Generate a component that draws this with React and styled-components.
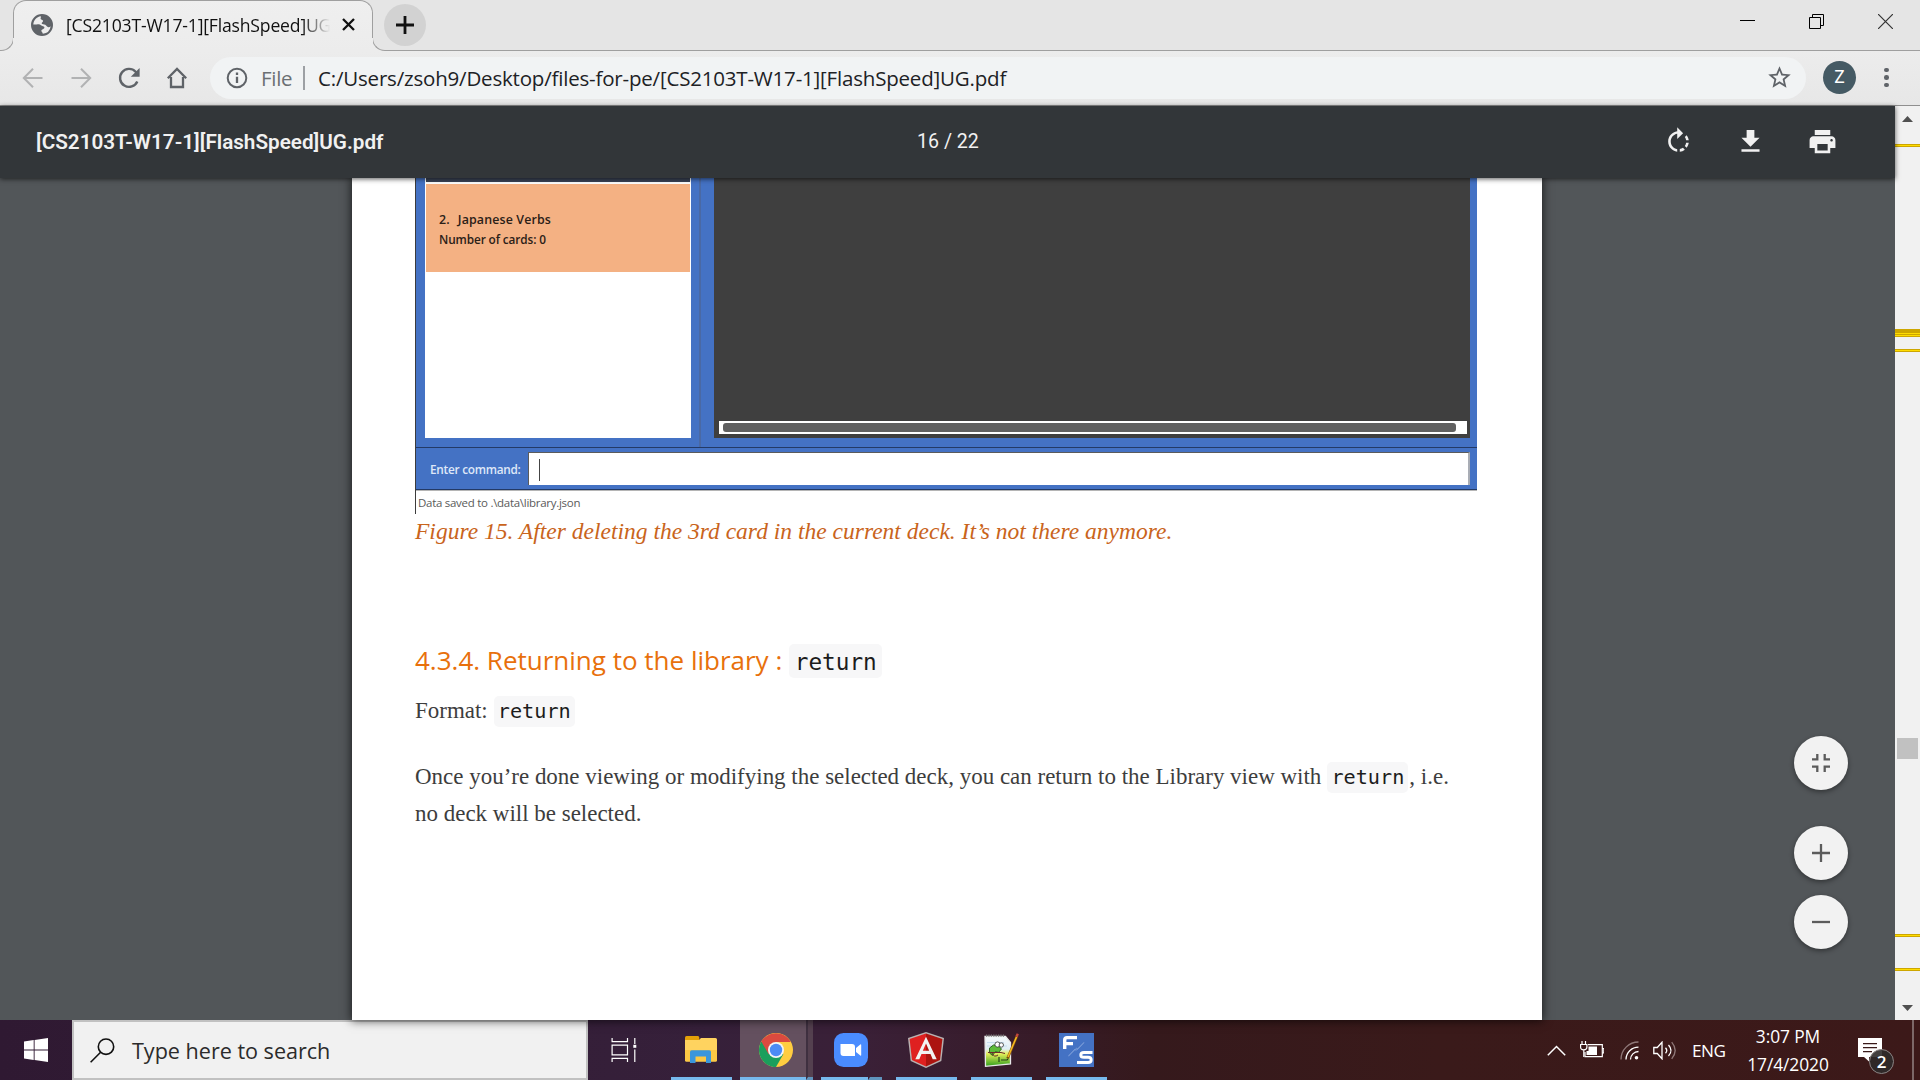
import React from "react";
import styled, { createGlobalStyle } from "styled-components";
import { MdPrint, MdFileDownload, MdStarBorder } from "react-icons/md";

const UI = '"Open Sans", "Noto Sans", sans-serif';
const SERIF = '"Liberation Serif", serif';
const MONO = '"DejaVu Sans Mono", monospace';

const GlobalStyle = createGlobalStyle`
  *, *::before, *::after { box-sizing: border-box; }
  body { margin: 0; overflow: hidden; background: #525659; }
  svg { display: block; flex: none; }
`;

const Desktop = styled.div`
  width: 1920px;
  height: 1080px;
  display: flex;
  flex-direction: column;
  overflow: hidden;
  font-family: ${UI};
  white-space: pre;
`;

/* ---------- tab strip ---------- */
const TabStrip = styled.header`
  flex: none;
  height: 51px;
  display: flex;
  background: #ececec;
`;
const LeftFoot = styled.div`
  position: relative;
  width: 14px;
  margin-right: -1px;
  background: #e5e5e5;
  border-radius: 0 0 13px 0;
  &::after {
    content: "";
    position: absolute;
    inset: auto 0 0 0;
    height: 38px;
    border: solid #9f9f9f;
    border-width: 0 1.5px 1.5px 0;
    border-radius: 0 0 13px 0;
  }
`;
const TabWrap = styled.div`
  width: 360px;
  background: #e5e5e5;
  z-index: 1;
  height: 38px;
`;
const Tab = styled.div`
  height: 51px;
  padding: 0 18px 2px 18px;
  display: flex;
  align-items: center;
  background: linear-gradient(#efefef, #ececec);
  border-radius: 13px 13px 0 0;
  position: relative;
  &::after {
    content: "";
    position: absolute;
    inset: 0 0 auto 0;
    height: 38px;
    border: solid #9f9f9f;
    border-width: 1.5px 1.5px 0 1.5px;
    border-radius: 13px 13px 0 0;
  }
`;
const TabTitle = styled.span`
  flex: 1;
  margin: 0 11px 0 13px;
  overflow: hidden;
  font-size: 17.6px;
  letter-spacing: -0.18px;
  line-height: 26px;
  color: #111;
  mask-image: linear-gradient(90deg, #000 236px, transparent 264px);
`;
const RightFoot = styled.div`
  flex: 1;
  display: flex;
  justify-content: space-between;
  align-items: flex-start;
  position: relative;
  margin-left: -1px;
  padding: 4px 27px 0 12px;
  background: #e5e5e5;
  border-radius: 0 0 0 13px;
  &::after {
    content: "";
    position: absolute;
    inset: auto 0 0 0;
    height: 38px;
    border: solid #9f9f9f;
    border-width: 0 0 1.5px 1.5px;
    border-radius: 0 0 0 13px;
  }
`;
const NewTab = styled.div`
  width: 42px;
  height: 42px;
  border-radius: 50%;
  background: #d2d2d2;
  display: flex;
  align-items: center;
  justify-content: center;
`;
const WindowControls = styled.div`
  display: flex;
  gap: 54px;
  padding-top: 10px;
`;

/* ---------- address bar ---------- */
const Toolbar = styled.div`
  flex: none;
  height: 55px;
  padding: 0 27px 1px 21px;
  display: flex;
  align-items: center;
  background: linear-gradient(#ececec, #e7e7e7);
  border-bottom: 1px solid #8f8f8f;
`;
const NavButtons = styled.div`
  display: flex;
  align-items: center;
  gap: 24px;
  width: 189px;
`;
const Omnibox = styled.div`
  flex: none;
  width: 1596px;
  height: 42px;
  padding: 0 13px 0 16px;
  border-radius: 21px;
  display: flex;
  align-items: center;
  background: #f1f3f4;
  font-size: 20.5px;
  line-height: 30px;
`;
const Scheme = styled.span`
  margin-left: 13px;
  width: 42px;
  letter-spacing: -0.3px;
  color: #6b6f73;
`;
const SchemeDivider = styled.i`
  width: 2px;
  height: 24px;
  background: #9da0a4;
`;
const Url = styled.span`
  flex: 1;
  margin-left: 13px;
  letter-spacing: -0.19px;
  color: #202124;
`;
const Avatar = styled.div`
  width: 33px;
  height: 33px;
  margin: 0 28px 0 17px;
  border-radius: 50%;
  background: #455a64;
  color: #fff;
  font: 400 17.5px/33px Roboto, sans-serif;
  text-align: center;
`;
const MenuDots = styled.div`
  display: flex;
  flex-direction: column;
  gap: 3px;
`;
const Dot = styled.i`
  width: 4.6px;
  height: 4.6px;
  border-radius: 50%;
  background: #5f6368;
`;

/* ---------- pdf viewer ---------- */
const Viewer = styled.main`
  flex: none;
  height: 914px;
  display: flex;
`;
const Pane = styled.section`
  position: relative;
  width: 1895px;
  display: flex;
  flex-direction: column;
  background: #525659;
`;
const PdfBar = styled.div`
  flex: none;
  height: 72px;
  padding: 0 57px 1px 36px;
  display: grid;
  grid-template-columns: 881px 1fr auto;
  align-items: center;
  background: #323639;
  color: #f1f1f1;
  font-family: Roboto, sans-serif;
  box-shadow: 0 1px 5px rgba(0, 0, 0, 0.65);
  z-index: 1;
`;
const PdfTitle = styled.span`
  font-size: 20.7px;
  font-weight: 600;
`;
const PageCount = styled.span`
  font-size: 19.6px;
  font-weight: 450;
`;
const PdfActions = styled.div`
  display: flex;
  gap: 41px;
`;
const Sheet = styled.article`
  flex: 1;
  min-height: 0;
  width: 1190px;
  margin-left: 352px;
  padding-left: 63px;
  background: #fff;
  box-shadow: 0 0 9px 1px rgba(0, 0, 0, 0.65);
`;
const Figure = styled.div`
  width: 1062px;
  height: 336px;
  border-left: 1px solid #3c3c3c;
  display: flex;
  flex-direction: column;
`;
const AppBody = styled.div`
  height: 269px;
  display: flex;
  background: #4472c4;
`;
const DeckColumn = styled.div`
  width: 285px;
  padding: 0 8px 9px 9px;
  border-right: 2px solid #4a69a4;
`;
const DeckList = styled.div`
  height: 260px;
  padding: 0 1px;
  background: #fff;
`;
const SelectedDeck = styled.div`
  height: 4px;
  background: #3b4457;
`;
const DeckCard = styled.div`
  height: 88px;
  margin-top: 2px;
  padding: 26px 0 0 13px;
  background: #f4b183;
  color: #2b2017;
  font-weight: 600;
  line-height: 19.5px;
`;
const DeckName = styled.div`
  display: flex;
  gap: 8px;
  font-size: 12.4px;
  letter-spacing: 0.15px;
`;
const DeckCount = styled.div`
  font-size: 11.8px;
  letter-spacing: -0.1px;
`;
const CardPanel = styled.div`
  width: 756px;
  height: 260px;
  margin-left: 13px;
  padding: 0 3px 4px 5px;
  display: flex;
  align-items: flex-end;
  background: #3f3f3f;
`;
const ScrollStrip = styled.div`
  flex: 1;
  height: 13px;
  padding: 2px 11px 2px 4px;
  background: #fff;
`;
const StripThumb = styled.div`
  height: 9px;
  border-radius: 3px;
  background: #606060;
`;
const CommandBar = styled.div`
  height: 43px;
  padding: 4px 7px 4px 14px;
  display: flex;
  border: solid #233a66;
  border-width: 1px 0;
  background: #4472c4;
  box-shadow: 0 1px 0 #b5b5b5;
`;
const CommandLabel = styled.span`
  width: 98px;
  font-size: 11.8px;
  font-weight: 600;
  letter-spacing: -0.26px;
  line-height: 35px;
  color: #dfe8f8;
`;
const CommandInput = styled.div`
  flex: 1;
  padding: 6px 0 0 10px;
  border: solid #5b5b5b;
  border-width: 1px 1px 0 1px;
  border-right: 2px solid #a9adb5;
  background: #fff;
`;
const Caret = styled.div`
  width: 1.4px;
  height: 22px;
  background: #444;
`;
const Status = styled.div`
  padding: 0 2px;
  font-size: 11.5px;
  letter-spacing: -0.28px;
  line-height: 25px;
  color: #5a5a5a;
`;
const Caption = styled.div`
  font: italic 23.52px/34px ${SERIF};
  color: #c9641c;
`;
const Heading = styled.h4`
  margin: 94px 0 0;
  display: flex;
  align-items: center;
  height: 36px;
  font-size: 26px;
  font-weight: 400;
  line-height: 36px;
  color: #e8700c;
`;
const Line = styled.div`
  height: 37px;
  display: flex;
  align-items: center;
  margin-top: ${(p) => p.$gap || 0}px;
  font: 22.97px/37px ${SERIF};
  color: #3d3d3d;
`;
const Code = styled.code`
  width: ${(p) => (p.$large ? 93 : 81)}px;
  height: ${(p) => (p.$large ? 34 : 31)}px;
  margin: 2px 1px 0 ${(p) => (p.$large ? 7 : 6)}px;
  border-radius: 5px;
  background: #f7f7f8;
  color: #1c1c1c;
  font: ${(p) => (p.$large ? 22.7 : 20.2)}px/${(p) => (p.$large ? 36 : 31)}px ${MONO};
  text-align: center;
`;
const ZoomControls = styled.div`
  position: absolute;
  right: 47px;
  top: 630px;
  display: flex;
  flex-direction: column;
  gap: 15px;
`;
const RoundButton = styled.div`
  width: 54px;
  height: 54px;
  margin-bottom: ${(p) => (p.$apart ? 21 : 0)}px;
  border-radius: 50%;
  display: flex;
  align-items: center;
  justify-content: center;
  background: #f2f2f2;
  box-shadow: 0 2px 5px rgba(0, 0, 0, 0.4);
`;
const Scrollbar = styled.aside`
  position: relative;
  width: 25px;
  padding: 10px 7px 9px;
  display: flex;
  flex-direction: column;
  justify-content: space-between;
  background: #f1f1f1;
`;
const Thumb = styled.div`
  position: absolute;
  left: 2px;
  top: 632px;
  width: 21px;
  height: 21px;
  background: #c1c1c1;
`;
const Marker = styled.div`
  position: absolute;
  left: 0;
  top: ${(p) => p.$y}px;
  width: 25px;
  height: 3px;
  background: #ffdc00;
  border: solid #cda600;
  border-width: 1px 0;
`;
const MarkerBlock = styled.div`
  position: absolute;
  left: 0;
  top: 223px;
  width: 25px;
  height: 8px;
  background: linear-gradient(#cda600 4px, #ffdc00 4px, #ffdc00 5px, #cda600 5px, #cda600 6px, #ffdc00 6px, #ffdc00 7px, #cda600 7px);
`;

/* ---------- taskbar ---------- */
const Taskbar = styled.footer`
  height: 60px;
  display: flex;
  background: linear-gradient(90deg, #2f1932 0%, #36203a 37%, #3a2037 45%, #371b28 54%, #35191c 60%, #3a1a1a 75%, #3c1919 100%);
  color: #fff;
`;
const StartButton = styled.div`
  width: 72px;
  display: flex;
  align-items: center;
  justify-content: center;
`;
const SearchBox = styled.div`
  width: 516px;
  padding-left: 16px;
  display: flex;
  align-items: center;
  gap: 17px;
  border: 2px solid #c1c1c1;
  background: #f1f1f1;
  color: #2b2b2b;
  font-size: 21.6px;
`;
const SearchHint = styled.span`
  padding-top: 2px;
  line-height: 30px;
  letter-spacing: -0.02px;
`;
const TaskView = styled.div`
  width: 72px;
  display: flex;
  align-items: center;
  justify-content: center;
`;
const AppButton = styled.div`
  width: ${(p) => p.$w || 61}px;
  margin-left: ${(p) => p.$gap}px;
  display: flex;
`;
const AppMain = styled.div`
  flex: 1;
  padding: ${(p) => p.$pad || "2px 2px 0 0"};
  display: flex;
  align-items: center;
  justify-content: center;
  border-bottom: 3px solid #76b9ed;
  background: ${(p) => (p.$active ? "#64505f" : "none")};
`;
const AppStack = styled.div`
  width: ${(p) => p.$w}px;
  border-left: 2px solid ${(p) => (p.$active ? "#3f3040" : "transparent")};
  border-bottom: 3px solid #5f94bd;
  background: ${(p) => (p.$active ? "#54404f" : "none")};
`;
const Tray = styled.div`
  margin-left: auto;
  display: flex;
  align-items: center;
`;
const TrayItem = styled.div`
  width: ${(p) => p.$w}px;
  margin-right: ${(p) => p.$gap}px;
  display: flex;
`;
const Language = styled.span`
  width: 35px;
  margin-right: 16px;
  font-size: 17.2px;
  letter-spacing: -0.5px;
`;
const Clock = styled.div`
  width: 90px;
  margin-right: 25px;
  font-size: 17.4px;
  letter-spacing: -0.1px;
  line-height: 28.5px;
  text-align: center;
`;
const Notifications = styled.div`
  position: relative;
  width: 36px;
  height: 60px;
  padding-top: 18px;
`;
const Badge = styled.span`
  position: absolute;
  left: 11px;
  top: 29px;
  width: 25px;
  height: 25px;
  border: 1px solid #8b8484;
  border-radius: 50%;
  background: rgba(45, 42, 42, 0.9);
  font-size: 17px;
  font-weight: 600;
  line-height: 23px;
  text-align: center;
`;
const ShowDesktop = styled.i`
  width: 2px;
  height: 60px;
  margin: 0 6px 0 18px;
  background: #7d6868;
`;

const stroke = (c, w) => ({ fill: "none", stroke: c, strokeWidth: w });

const Globe = () => (
  <svg width="22" height="22" viewBox="2 2 20 20" fill="#5f6368">
    <path d="M12 2a10 10 0 1 0 0 20 10 10 0 0 0 0-20zm.8 18c-.6-1.900-1.400-1.700-1.400-2.700 0-1.300 1.600-1.300 2.600-2.300.6-.7 0-1.700-1.100-1.900-1.500-.2-2.200-1.500-4-1.700-1.400-.2-3.200.5-4.800.1C4.300 8 7 4.600 10.900 4.100c.5.900-.5 1.700-.1 2.500.4.800 1.900.6 2.200 1.600.2 1-1.500 1.600-1.300 2.500.3 1 2.200.6 3.300 1.100 1.200.6 1.400 2.100 2.800 2.200.8.100 1.500-.3 2.100-.8a8 8 0 0 1-7.100 6.800z" />
  </svg>
);
const Close = () => (
  <svg width="13" height="13" viewBox="0 0 13 13" {...stroke("#111", 2.3)}><path d="M1 1l11 11M12 1L1 12" /></svg>
);
const Plus = () => (
  <svg width="18" height="18" viewBox="0 0 18 18" {...stroke("#111", 2.8)}><path d="M9 0v18M0 9h18" /></svg>
);
const Back = () => (
  <svg width="24" height="24" viewBox="0 0 24 24" {...stroke("#b1b2b3", 2)}><path d="M21.500 12H3M12 2.800L2.800 12l9.200 9.200" /></svg>
);
const Forward = () => (
  <svg width="24" height="24" viewBox="0 0 24 24" {...stroke("#b1b2b3", 2)}><path d="M2.500 12H21M12 2.800l9.200 9.200-9.200 9.200" /></svg>
);
const Reload = () => (
  <svg width="24" height="24" viewBox="0 0 24 24">
    <path d="M20.300 15.500A9 9 0 1 1 18.600 5.700l1.600 1.800" {...stroke("#5f6368", 2.4)} />
    <path d="M22.600 2v8.800h-8.800z" fill="#5f6368" />
  </svg>
);
const Home = () => (
  <svg width="24" height="24" viewBox="0 0 24 24" {...stroke("#5f6368", 2.3)}><path d="M6 11v10h12V11M2.800 12.200L12 3l9.200 9.200" /></svg>
);
const Info = () => (
  <svg width="22" height="22" viewBox="0 0 22 22">
    <circle cx="11" cy="11" r="9.300" {...stroke("#5f6368", 2)} />
    <path d="M11 9.800v6.200M11 5.600v2.300" {...stroke("#5f6368", 2.3)} />
  </svg>
);
const Rotate = () => (
  <svg width="31" height="31" viewBox="0 0 24 24" fill="#f1f1f1">
    <path d="M15.550 5.550L11 1v3.070C7.060 4.560 4 7.920 4 12s3.050 7.440 7 7.930v-2.020c-2.840-.48-5-2.940-5-5.910s2.160-5.430 5-5.910V10l4.550-4.450zM19.930 11c-.17-1.390-.72-2.730-1.620-3.890l-1.420 1.420c.54.75.88 1.600 1.020 2.470h2.020zM13 17.900v2.020c1.390-.17 2.740-.71 3.900-1.610l-1.440-1.440c-.75.54-1.590.89-2.460 1.030zm3.890-2.420l1.420 1.410c.9-1.160 1.450-2.500 1.620-3.890h-2.020c-.14.87-.48 1.720-1.020 2.480z" />
  </svg>
);
const Minimize = () => (
  <svg width="15" height="15" viewBox="0 0 15 15"><path d="M0 6.500h15" {...stroke("#000", 1)} /></svg>
);
const Restore = () => (
  <svg width="15" height="15" viewBox="0 0 15 15" {...stroke("#000", 1)}><path d="M.5 3.500h11v11H.5zM3.500 3.500v-3h11v11h-3" /></svg>
);
const CloseWindow = () => (
  <svg width="15" height="15" viewBox="0 0 15 15" {...stroke("#333", 1.2)}><path d="M0 0l15 15M15 0L0 15" /></svg>
);
const FitIcon = () => (
  <svg width="18" height="18" viewBox="0 0 18 18" {...stroke("#5c5c5c", 2.3)}><path d="M5.300 0v5.300H0M12.700 0v5.300H18M5.300 18v-5.300H0M12.700 18v-5.300H18" /></svg>
);
const ZoomIn = () => (
  <svg width="18" height="18" viewBox="0 0 18 18" {...stroke("#5c5c5c", 2.3)}><path d="M9 0v18M0 9h18" /></svg>
);
const ZoomOut = () => (
  <svg width="18" height="18" viewBox="0 0 18 18" {...stroke("#5c5c5c", 2.3)}><path d="M0 9h18" /></svg>
);
const ArrowUp = () => (
  <svg width="11" height="6" viewBox="0 0 11 6" fill="#505050"><path d="M0 6L5.500 0 11 6z" /></svg>
);
const ArrowDown = () => (
  <svg width="11" height="6" viewBox="0 0 11 6" fill="#505050"><path d="M0 0l5.500 6L11 0z" /></svg>
);
const WindowsLogo = () => (
  <svg width="24" height="24" viewBox="0 0 24 24" fill="#fff"><path d="M0 3.400l9.700-1.300v9.400H0zM10.600 2L24 0v11.500H10.600zM0 12.400h9.700v9.500L0 20.600zM10.600 12.400H24V24l-13.400-1.900z" /></svg>
);
const SearchGlass = () => (
  <svg width="25" height="25" viewBox="0 0 25 25" {...stroke("#111", 1.6)}><circle cx="16" cy="8.700" r="7.700" /><path d="M10.600 14.300L.6 24.300" /></svg>
);
const TaskViewIcon = () => (
  <svg width="26" height="24" viewBox="0 0 26 24" {...stroke("#fff", 1.2)}>
    <path d="M1.100 0v3.600h15.400V0M1.100 24v-3.600h15.400V24M1.100 7.100h15.400v9.800H1.100zM23.800 0v6M23.800 11.500V24" />
    <path d="M22.300 6.800h3v3h-3z" fill="#fff" stroke="none" />
  </svg>
);
const Explorer = () => (
  <svg width="32" height="28" viewBox="0 0 32 28">
    <path d="M0 8V1.500Q0 0 1.500 0h11.300q1.500 0 1.500 1.800V8z" fill="#e3a008" />
    <path d="M0 4h14l2-2h14.500q1.500 0 1.500 1.500V24q0 1.500-1.500 1.500h-29Q0 25.500 0 24z" fill="#ffd35f" />
    <path d="M0 14h32v10q0 1.500-1.500 1.500h-29Q0 25.500 0 24z" fill="#fcc844" />
    <path d="M5 27V16q0-1.700 1.700-1.700h17.600q1.700 0 1.700 1.700v11h-5v-6.500H10.500V27z" fill="#3a96dd" />
  </svg>
);
const Chrome = () => (
  <svg width="34" height="34" viewBox="0 0 34 34">
    <circle cx="17" cy="17" r="17" fill="#ffcd40" />
    <path d="M17 17L2.300 8.500A17 17 0 0 0 17 34l7.300-12.700z" fill="#1a9f5c" />
    <path d="M2.300 8.500A17 17 0 0 1 31.700 8.900H17L9.700 21.200z" fill="#db4a3f" />
    <circle cx="17" cy="17" r="8" fill="#f4f4f4" />
    <circle cx="17" cy="17" r="6.200" fill="#4c8bf5" />
  </svg>
);
const Zoom = () => (
  <svg width="34" height="34" viewBox="0 0 34 34">
    <rect width="34" height="34" rx="9.500" fill="#4a8cff" />
    <path d="M6.500 11h11.500q3 0 3 3v9H9.500q-3 0-3-3zM22 15l4.300-3.500q.9-.6.900.5v10q0 1.100-.9.500L22 19z" fill="#fff" />
  </svg>
);
const Angular = () => (
  <svg width="36" height="36" viewBox="0 0 36 36">
    <path d="M18 0l18 6-2.700 23L18 36 2.700 29 0 6z" fill="#b8b1b1" />
    <path d="M18 1.500v32.900L4 28 1.600 7z" fill="#df2020" />
    <path d="M18 1.500v32.900L32 28l2.400-21z" fill="#ac1410" />
    <path d="M18 4.800L7.300 27.200h4l2.200-5.200h9l2.200 5.200h4zM18 11.500l3.200 7.300h-6.400z" fill="#f2f2f2" fillRule="evenodd" />
  </svg>
);
const NotepadPlus = () => (
  <svg width="36" height="34" viewBox="0 0 36 34">
    <defs>
      <linearGradient id="leaf" x1="0" y1="0" x2="0" y2="1">
        <stop offset="0" stopColor="#f4f8fb" /><stop offset=".42" stopColor="#dfeef5" />
        <stop offset=".58" stopColor="#e4ee5a" /><stop offset="1" stopColor="#2f9e1c" />
      </linearGradient>
    </defs>
    <path d="M2 3.500h20.500l5 6V31L2.500 33.300z" fill="url(#leaf)" stroke="#e9e9e9" strokeWidth="1.300" />
    <path d="M3 2.600h18" stroke="#777" strokeWidth="2.400" strokeDasharray="1.200 1.200" />
    <path d="M4 9.500h17M4 13h20" stroke="#bcd6ec" strokeWidth=".8" />
    <path d="M6.500 15q4-4.500 8-3l4 4-3 3.500-3-1-3 4-3-2.500z" fill="#5dbb3a" stroke="#245c17" strokeWidth=".9" />
    <path d="M5 19.500h13l4 1M9 20q2 5 6 2" {...stroke("#6d2a2a", 1)} />
    <circle cx="14.500" cy="11.500" r="2.600" fill="#fff" stroke="#333" strokeWidth=".8" />
    <circle cx="18.300" cy="12" r="2.200" fill="#fff" stroke="#333" strokeWidth=".8" />
    <path d="M16 24v5M18 27h6l1-1" {...stroke("#24431a", 1.2)} />
    <path d="M34.200 2.500L24.500 25.500" stroke="#7a4a10" strokeWidth="2.600" />
    <path d="M33.500 4L25 24" stroke="#f5b921" strokeWidth="1.600" />
    <path d="M34.800 .8l-1.300 3" stroke="#c4483a" strokeWidth="2.400" />
  </svg>
);
const FlashSpeed = () => (
  <svg width="35" height="34" viewBox="0 0 35 34">
    <rect width="35" height="34" fill="#4472c4" />
    <path d="M18 4.600H8Q5.700 4.600 5.700 7v9M5.700 10.600H14" {...stroke("#fff", 3.4)} />
    <path d="M33.500 19.500H25q-3.200 0-3.200 2.400t3.200 2.400h4q3.200 0 3.200 2.600t-3.200 2.600H18" {...stroke("#fff", 2.9)} />
    <path d="M9.500 23l6.500-7 .8 1.500L25 9.500l-6.500 7-.8-1.500z" {...stroke("#7f9fd9", 0.8)} />
  </svg>
);
const Chevron = () => (
  <svg width="19" height="11" viewBox="0 0 19 11" {...stroke("#fff", 1.5)}><path d="M.8 10.200l8.700-8.700 8.700 8.700" /></svg>
);
const Battery = () => (
  <svg width="24" height="18" viewBox="0 0 24 18">
    <path d="M8 3.700h14.300v12H5V11M22.800 7.500h1v4.500h-1" {...stroke("#fff", 1.2)} />
    <path d="M8.500 5.600h8.500v8.300H6.500V10h2z" fill="#fff" />
    <path d="M2 0v3.500M5.500 0v3.500M.6 3.500h6.300v2.800q0 2.500-3.150 2.500T.6 6.300zM3.800 9v7" {...stroke("#fff", 1.2)} />
  </svg>
);
const Wifi = () => (
  <svg width="19" height="19" viewBox="0 0 19 19">
    <path d="M1 18.500A17.500 17.500 0 0 1 18.500 1" {...stroke("#8f7878", 1.3)} />
    <path d="M6 18.500a12.500 12.500 0 0 1 12.500-12.300M10.500 18.500a8 8 0 0 1 8-8" {...stroke("#fff", 1.3)} />
    <circle cx="16.500" cy="16.800" r="1.800" fill="#fff" />
  </svg>
);
const Speaker = () => (
  <svg width="23" height="19" viewBox="0 0 23 19">
    <path d="M.8 6.500h3.500L9 1.200v16.600l-4.700-5.300H.8z" {...stroke("#fff", 1.3)} />
    <path d="M12.500 6.700q2.500 2.800 0 5.600M15.500 4q5 5.500 0 11" {...stroke("#fff", 1.3)} />
    <path d="M18.700 1.200q7 8.300 0 16.600" {...stroke("#8f7878", 1.3)} />
  </svg>
);
const MessageIcon = () => (
  <svg width="24" height="24" viewBox="0 0 24 24">
    <path d="M0 0h24v19H11v4.500L6 19H0z" fill="#fff" />
    <path d="M5 5.700h14M5 9.700h14M5 13.700h9" {...stroke("#3a1a1a", 1.2)} />
  </svg>
);

const APPS = [
  { id: "explorer", gap: 11, Icon: Explorer },
  { id: "chrome", gap: 8, Icon: Chrome, width: 73, active: true, stack: 7, pad: "2px 0 0 5px" },
  { id: "zoom", gap: 8, Icon: Zoom, stack: 14, pad: "2px 0 0 13px" },
  { id: "angular", gap: 14, Icon: Angular },
  { id: "notepad", gap: 14, Icon: NotepadPlus },
  { id: "flashspeed", gap: 14, Icon: FlashSpeed, pad: "2px 0 0 0" },
];

const MARKERS = [38, 243, 828, 862];

export default function App() {
  return (
    <Desktop>
      <GlobalStyle />
      <TabStrip>
        <LeftFoot />
        <TabWrap>
          <Tab>
            <Globe />
            <TabTitle>[CS2103T-W17-1][FlashSpeed]UG.pdf</TabTitle>
            <Close />
          </Tab>
        </TabWrap>
        <RightFoot>
          <NewTab><Plus /></NewTab>
          <WindowControls><Minimize /><Restore /><CloseWindow /></WindowControls>
        </RightFoot>
      </TabStrip>

      <Toolbar>
        <NavButtons><Back /><Forward /><Reload /><Home /></NavButtons>
        <Omnibox>
          <Info />
          <Scheme>File</Scheme>
          <SchemeDivider />
          <Url>C:/Users/zsoh9/Desktop/files-for-pe/[CS2103T-W17-1][FlashSpeed]UG.pdf</Url>
          <MdStarBorder size={27} color="#5f6368" />
        </Omnibox>
        <Avatar>Z</Avatar>
        <MenuDots><Dot /><Dot /><Dot /></MenuDots>
      </Toolbar>

      <Viewer>
        <Pane>
          <PdfBar>
            <PdfTitle>[CS2103T-W17-1][FlashSpeed]UG.pdf</PdfTitle>
            <PageCount>16 / 22</PageCount>
            <PdfActions>
              <Rotate />
              <MdFileDownload size={31} />
              <MdPrint size={31} />
            </PdfActions>
          </PdfBar>
          <Sheet>
            <Figure>
              <AppBody>
                <DeckColumn>
                  <DeckList>
                    <SelectedDeck />
                    <DeckCard>
                      <DeckName><span>2.</span><span>Japanese Verbs</span></DeckName>
                      <DeckCount>Number of cards: 0</DeckCount>
                    </DeckCard>
                  </DeckList>
                </DeckColumn>
                <CardPanel>
                  <ScrollStrip><StripThumb /></ScrollStrip>
                </CardPanel>
              </AppBody>
              <CommandBar>
                <CommandLabel>Enter command:</CommandLabel>
                <CommandInput><Caret /></CommandInput>
              </CommandBar>
              <Status>{"Data saved to .\\data\\library.json"}</Status>
            </Figure>
            <Caption>Figure 15. After deleting the 3rd card in the current deck. It’s not there anymore.</Caption>
            <Heading>4.3.4. Returning to the library :<Code $large>return</Code></Heading>
            <Line $gap={14}>Format:<Code>return</Code></Line>
            <Line $gap={29}>
              Once you’re done viewing or modifying the selected deck, you can return to the Library view with<Code>return</Code>, i.e.
            </Line>
            <Line>no deck will be selected.</Line>
          </Sheet>
          <ZoomControls>
            <RoundButton $apart><FitIcon /></RoundButton>
            <RoundButton><ZoomIn /></RoundButton>
            <RoundButton><ZoomOut /></RoundButton>
          </ZoomControls>
        </Pane>
        <Scrollbar>
          <ArrowUp />
          {MARKERS.map((y) => <Marker key={y} $y={y} />)}
          <MarkerBlock />
          <Thumb />
          <ArrowDown />
        </Scrollbar>
      </Viewer>

      <Taskbar>
        <StartButton><WindowsLogo /></StartButton>
        <SearchBox><SearchGlass /><SearchHint>Type here to search</SearchHint></SearchBox>
        <TaskView><TaskViewIcon /></TaskView>
        {APPS.map(({ id, gap, Icon, width, active, stack, pad }) => (
          <AppButton key={id} $w={width} $gap={gap}>
            <AppMain $active={active} $pad={pad}><Icon /></AppMain>
            {stack && <AppStack $w={stack} $active={active} />}
          </AppButton>
        ))}
        <Tray>
          <TrayItem $w={19} $gap={14}><Chevron /></TrayItem>
          <TrayItem $w={24} $gap={16}><Battery /></TrayItem>
          <TrayItem $w={19} $gap={14}><Wifi /></TrayItem>
          <TrayItem $w={23} $gap={16}><Speaker /></TrayItem>
          <Language>ENG</Language>
          <Clock>3:07 PM<br />17/4/2020</Clock>
          <Notifications><MessageIcon /><Badge>2</Badge></Notifications>
          <ShowDesktop />
        </Tray>
      </Taskbar>
    </Desktop>
  );
}
